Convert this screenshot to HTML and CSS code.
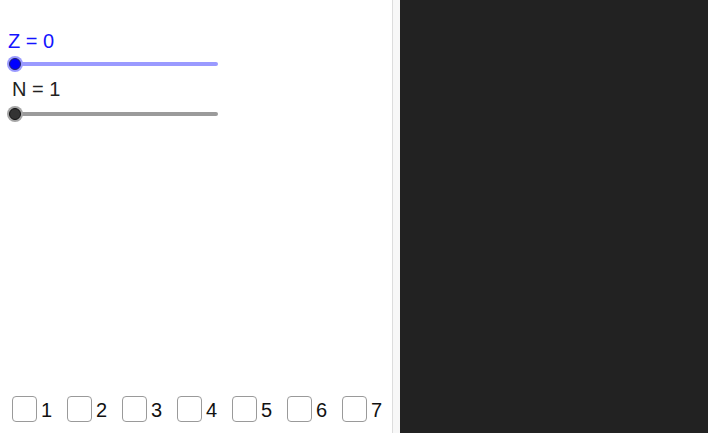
FILE: index.html
```html
<!DOCTYPE html>
<html>
<head>
<meta charset="utf-8">
<link rel="stylesheet" href="styles.css">
</head>
<body>
<div class="app">
  <div class="left">
    <div class="controls">
      <div class="label label-z">Z = 0</div>
      <svg class="slider" width="222" height="20" viewBox="0 0 222 20">
        <line x1="15" y1="10" x2="216" y2="10" stroke="#9a9aff" stroke-width="4" stroke-linecap="round"/>
        <circle cx="15" cy="10" r="8" fill="#9a9aff"/>
        <circle cx="15" cy="10" r="5.5" fill="#0000ff" stroke="#222266" stroke-width="1"/>
      </svg>
      <div class="label label-n">N = 1</div>
      <svg class="slider" width="222" height="20" viewBox="0 0 222 20">
        <line x1="15" y1="10" x2="216" y2="10" stroke="#9b9b9b" stroke-width="4" stroke-linecap="round"/>
        <circle cx="15" cy="10" r="8" fill="#a5a5a5"/>
        <circle cx="15" cy="10" r="5.5" fill="#333333" stroke="#111" stroke-width="1"/>
      </svg>
    </div>
    <div class="checks">
      <label class="check"><span class="box"></span><span class="num">1</span></label>
      <label class="check"><span class="box"></span><span class="num">2</span></label>
      <label class="check"><span class="box"></span><span class="num">3</span></label>
      <label class="check"><span class="box"></span><span class="num">4</span></label>
      <label class="check"><span class="box"></span><span class="num">5</span></label>
      <label class="check"><span class="box"></span><span class="num">6</span></label>
      <label class="check"><span class="box"></span><span class="num">7</span></label>
    </div>
  </div>
  <div class="divider"></div>
  <div class="right"></div>
</div>
</body>
</html>
```
FILE: styles.css
```css
html, body {
  margin: 0;
  padding: 0;
  background: #ffffff;
}
body {
  font-family: "Liberation Sans", Arial, sans-serif;
}
.app {
  display: flex;
  width: 708px;
  height: 433px;
}
.left {
  width: 392px;
  display: flex;
  flex-direction: column;
  justify-content: space-between;
  background: #ffffff;
}
.controls {
  padding-top: 30px;
  display: flex;
  flex-direction: column;
}
.label {
  font-size: 20px;
  line-height: 22px;
}
.label-z {
  color: #1414ff;
  padding-left: 8px;
}
.label-n {
  color: #222222;
  padding-left: 12px;
  margin-top: 4px;
}
.slider {
  display: block;
  margin-top: 2px;
}
.label-n + .slider {
  margin-top: 4px;
}
.checks {
  display: flex;
  gap: 15px;
  padding-left: 12px;
  padding-bottom: 11px;
}
.check {
  display: flex;
  align-items: center;
  gap: 4px;
  width: 40px;
}
.box {
  width: 23px;
  height: 24px;
  border: 1px solid #9a9a9a;
  border-radius: 4px;
  background: #fff;
}
.num {
  font-size: 20px;
  color: #111;
  line-height: 22px;
  padding-top: 2px;
}
.divider {
  width: 7px;
  border-left: 1px solid #dcdcdc;
  background: #f7f7f7;
}
.right {
  flex: 1;
  background: #222222;
}
```
